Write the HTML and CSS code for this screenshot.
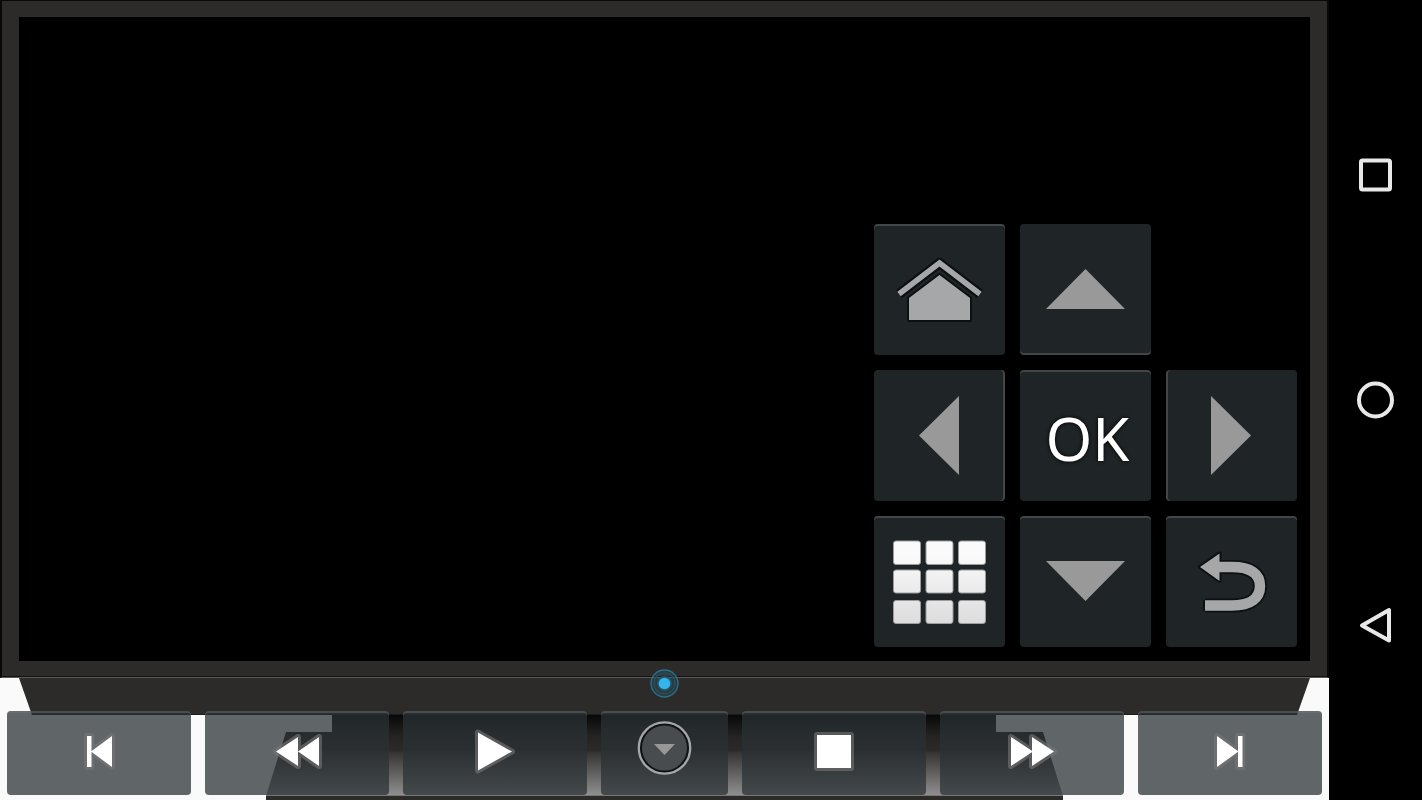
FILE: index.html
```html
<!DOCTYPE html>
<html lang="en">
<head>
<meta charset="utf-8">
<title>Remote</title>
<link rel="stylesheet" href="styles.css">
</head>
<body>
<main class="remote">
  <section class="tv">
    <div class="screen">
      <div class="pad">
        <button class="key edge-top" aria-label="Home">
          <svg viewBox="0 0 131 131"><g class="shade"><path d="M25 70L65.500 39L106 70" fill="none" stroke-width="10"/><path d="M35 74L65.500 51L96 74V96H35Z"/></g><path d="M25 70L65.500 39L106 70" fill="none" stroke="#a6a7a9" stroke-width="5.500"/><path d="M35 74L65.500 51L96 74V96H35Z" fill="#a6a7a9"/></svg>
        </button>
        <button class="key edge-bottom" aria-label="Up">
          <svg viewBox="0 0 131 131"><path d="M65.500 45L105 85H26Z" fill="#999"/></svg>
        </button>
        <button class="key edge-right left" aria-label="Left">
          <svg viewBox="0 0 131 131"><path d="M45 65.500L85 26V105Z" fill="#999"/></svg>
        </button>
        <button class="key edge-top ok">OK</button>
        <button class="key edge-left" aria-label="Right">
          <svg viewBox="0 0 131 131"><path d="M85 65.500L45 26V105Z" fill="#999"/></svg>
        </button>
        <button class="key edge-top" aria-label="Apps">
          <svg viewBox="0 0 131 131">
            <defs><linearGradient id="tiles" gradientUnits="userSpaceOnUse" x1="0" y1="40" x2="0" y2="108"><stop offset="0" stop-color="#fafafa"/><stop offset="1" stop-color="#dcdcdc"/></linearGradient></defs>
            <g fill="url(#tiles)" stroke="#9a9c9e" stroke-width="1">
              <rect x="19.500" y="25" width="27" height="23.500" rx="2.500"/><rect x="52" y="25" width="27" height="23.500" rx="2.500"/><rect x="84.500" y="25" width="27" height="23.500" rx="2.500"/>
              <rect x="19.500" y="54" width="27" height="23" rx="2.500"/><rect x="52" y="54" width="27" height="23" rx="2.500"/><rect x="84.500" y="54" width="27" height="23" rx="2.500"/>
              <rect x="19.500" y="84.500" width="27" height="23" rx="2.500"/><rect x="52" y="84.500" width="27" height="23" rx="2.500"/><rect x="84.500" y="84.500" width="27" height="23" rx="2.500"/>
            </g>
          </svg>
        </button>
        <button class="key edge-top" aria-label="Down">
          <svg viewBox="0 0 131 131"><path d="M26 45H105L65.500 85Z" fill="#999"/></svg>
        </button>
        <button class="key edge-top" aria-label="Back">
          <svg viewBox="0 0 131 131"><g class="shade"><path d="M34 51L53.500 37.500V65Z"/><path d="M53 51H66C85 51 94 58 94 70S85 89.500 66 89.500H39" fill="none" stroke-width="14"/><path d="M39 84V95"/></g><path d="M34 51L53.500 37.500V65Z" fill="#a6a7a9"/><path d="M53 51H66C85 51 94 58 94 70S85 89.500 66 89.500H39" fill="none" stroke="#a6a7a9" stroke-width="10.500"/></svg>
        </button>
      </div>
    </div>
  </section>

  <section class="dock">
    <svg class="stand" viewBox="0 0 1329 122" preserveAspectRatio="none" aria-hidden="true">
      <defs><linearGradient id="stand" gradientUnits="userSpaceOnUse" x1="0" y1="37" x2="0" y2="117"><stop offset="0" stop-color="#080808"/><stop offset=".26" stop-color="#242322"/><stop offset=".45" stop-color="#2d2b29"/><stop offset=".47" stop-color="#363432"/><stop offset="1" stop-color="#8f8f8f"/></linearGradient></defs>
      <path d="M19 0H1310L1297 37H32Z" fill="#2d2b29"/>
      <path d="M332 37H996V54H1043L1063 118H266L286 54H332Z" fill="url(#stand)"/>
      <path d="M266 117H1063V122H266Z" fill="#2d2b29"/>
      <path d="M266 117H1063V118H266Z" fill="#777"/>
      <path d="M32 36H1297V37H32Z" fill="#1c1b1a"/>
    </svg>
    <svg class="led" viewBox="0 0 30 30" aria-hidden="true">
      <circle cx="14.500" cy="15.500" r="13.500" fill="#28627a" fill-opacity=".3" stroke="#28718e" stroke-width="1.300"/>
      <circle cx="14.500" cy="15.500" r="10.500" fill="none" stroke="#285568" stroke-width="1"/>
      <circle cx="14.500" cy="15.500" r="7.500" fill="#235468"/>
      <circle cx="14.500" cy="15.500" r="5.800" fill="#35b6ea"/>
    </svg>
    <div class="transport">
      <button class="key edge-top" aria-label="Previous"><svg viewBox="0 0 64 56"><g class="glow"><path d="M20 13H24.500V44H20ZM24 28.500L45 13V44Z"/></g><path d="M20 13H24.500V44H20ZM24 28.500L45 13V44Z" fill="#fff"/></svg></button>
      <button class="key edge-top" aria-label="Rewind"><svg viewBox="0 0 64 56"><g class="glow"><path d="M11 28.500L33 14V43ZM33 28.500L54 14V43Z"/></g><path d="M11 28.500L33 14V43ZM33 28.500L54 14V43Z" fill="#fff"/></svg></button>
      <button class="key edge-top" aria-label="Play"><svg viewBox="0 0 64 56"><g class="glow"><path d="M15 9.500L49 28.500L15 47.500Z"/></g><path d="M15 9.500L49 28.500L15 47.500Z" fill="#fff"/></svg></button>
      <button class="key edge-top toggle" aria-label="Hide controls"><svg viewBox="0 0 56 56"><circle cx="28.500" cy="28" r="24" fill="#484c4f" stroke="#101214" stroke-width="3"/><circle cx="28.500" cy="28" r="25.700" fill="none" stroke="#a5a6a7" stroke-width="2.300"/><path d="M18 24H39L28.500 36Z" fill="#4f4d4a"/><path d="M18 24H39L28.500 35Z" fill="#999895"/></svg></button>
      <button class="key edge-top" aria-label="Stop"><svg viewBox="0 0 64 56"><g class="glow"><path d="M15 12H49V45H15Z"/></g><path d="M15 12H49V45H15Z" fill="#fff"/></svg></button>
      <button class="key edge-top" aria-label="Fast forward"><svg viewBox="0 0 64 56"><g class="glow"><path d="M11 14L33 28.500L11 43ZM32 14L54 28.500L32 43Z"/></g><path d="M11 14L33 28.500L11 43ZM32 14L54 28.500L32 43Z" fill="#fff"/></svg></button>
      <button class="key edge-top" aria-label="Next"><svg viewBox="0 0 64 56"><g class="glow"><path d="M19 13L40.500 28.500L19 44ZM40 13H44.500V44H40Z"/></g><path d="M19 13L40.500 28.500L19 44ZM40 13H44.500V44H40Z" fill="#fff"/></svg></button>
    </div>
  </section>
</main>

<nav class="system" aria-label="System">
  <button aria-label="Recent apps"><svg viewBox="0 0 40 40"><rect x="6" y="5.500" width="29" height="29" rx="1.500"/></svg></button>
  <button aria-label="Home screen"><svg viewBox="0 0 40 40"><circle cx="20.500" cy="20" r="16.500"/></svg></button>
  <button aria-label="Go back"><svg viewBox="0 0 40 40"><path d="M7 20.500L34 5V35.500Z"/></svg></button>
</nav>
</body>
</html>
```

FILE: styles.css
```css
* {
  box-sizing: border-box;
}

body {
  margin: 0;
  min-height: 100vh;
  display: flex;
  background: #000;
  font-family: "Noto Sans", sans-serif;
}

button {
  margin: 0;
  padding: 0;
  border: 0;
  background: none;
  display: flex;
  align-items: center;
  justify-content: center;
  cursor: pointer;
}

svg {
  display: block;
}

.remote {
  flex: 1;
  min-width: 0;
  display: flex;
  flex-direction: column;
}

.tv {
  flex: 1;
  display: flex;
  padding: 16px 17px;
  border: solid #080808;
  border-width: 1px 2px;
  border-bottom: 1px solid #5a5957;
  background: #2d2b29;
  box-shadow: inset 0 -1px #141312;
}

.screen {
  flex: 1;
  display: flex;
  justify-content: flex-end;
  align-items: flex-end;
  padding: 14px 13px;
  background: #000;
}

.pad {
  display: grid;
  grid-template-columns: repeat(3, 131px);
  grid-auto-rows: 131px;
  gap: 15px;
}

.left {
  grid-column: 1;
}

.key {
  border-radius: 4px;
  background: rgba(42, 48, 53, 0.74);
}

.edge-top {
  box-shadow: inset 0 2px rgba(120, 122, 124, 0.4);
}

.edge-bottom {
  box-shadow: inset 0 -2px rgba(120, 122, 124, 0.4);
}

.edge-left {
  box-shadow: inset 2px 0 rgba(120, 122, 124, 0.4);
}

.edge-right {
  box-shadow: inset -2px 0 rgba(120, 122, 124, 0.4);
}

.pad svg {
  width: 131px;
  height: 131px;
}

.shade {
  fill: #0c1013;
  stroke: #0c1013;
  stroke-width: 4px;
  stroke-linejoin: round;
}

.ok {
  padding: 4px 0 0 4px;
  color: #fff;
  font-family: "Noto Sans", sans-serif;
  font-size: 60px;
  line-height: 72px;
  text-shadow: 0 0 4px #000;
}

.dock {
  position: relative;
  padding: 33px 7px 5px;
  background: #fafafa;
}

.stand {
  position: absolute;
  inset: 0;
  width: 100%;
  height: 100%;
}

.led {
  position: absolute;
  top: -10px;
  left: 50%;
  width: 30px;
  height: 30px;
  transform: translateX(-50%);
}

.transport {
  position: relative;
  display: grid;
  grid-template-columns: repeat(3, 184fr) 126fr repeat(3, 184fr);
  gap: 14px;
}

.transport .key {
  height: 84px;
  padding-bottom: 4px;
}

.transport .toggle {
  padding-bottom: 10px;
}

.transport svg {
  width: 64px;
  height: 56px;
}

.glow {
  fill: #777;
  stroke: #777;
  stroke-width: 6px;
  stroke-linejoin: round;
  opacity: 0.6;
}

.system {
  width: 93px;
  display: flex;
  flex-direction: column;
  padding: 62px 1px 62px 0;
}

.system button {
  flex: 1;
}

.system svg {
  width: 40px;
  height: 40px;
  fill: none;
  stroke: #e8e8e8;
  stroke-width: 4px;
  stroke-linejoin: round;
}
```
